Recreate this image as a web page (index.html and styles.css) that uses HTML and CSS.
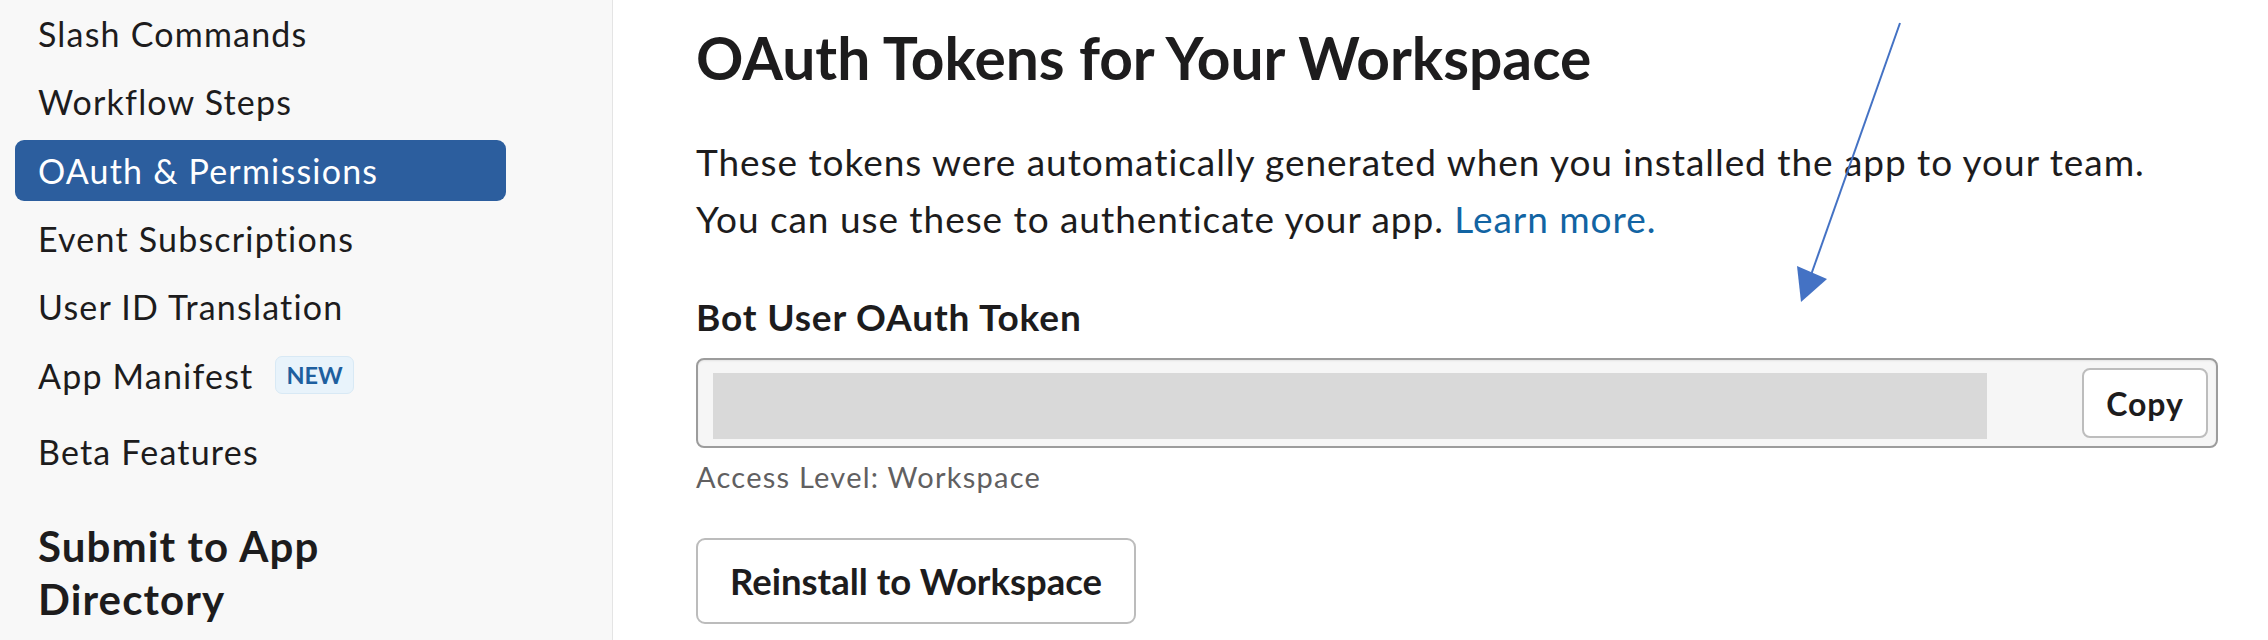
FILE: index.html
```html
<!DOCTYPE html>
<html lang="en">
<head>
<meta charset="utf-8">
<title>OAuth &amp; Permissions</title>
<link rel="stylesheet" href="styles.css">
</head>
<body>
<div class="layout">
  <aside class="sidebar">
    <nav class="nav">
      <a class="nav-item">Slash Commands</a>
      <a class="nav-item">Workflow Steps</a>
      <a class="nav-item active">OAuth &amp; Permissions</a>
      <a class="nav-item">Event Subscriptions</a>
      <a class="nav-item">User ID Translation</a>
      <a class="nav-item nav-item-tall"><span>App Manifest</span><span class="badge">NEW</span></a>
      <a class="nav-item">Beta Features</a>
    </nav>
    <h3 class="sidebar-heading">Submit to App Directory</h3>
  </aside>
  <main class="content">
    <h1 class="page-title">OAuth Tokens for Your Workspace</h1>
    <p class="intro">These tokens were automatically generated when you installed the app to your team.<br>You can use these to authenticate your app. <a class="link">Learn more.</a></p>
    <label class="field-label">Bot User OAuth Token</label>
    <div class="token-field">
      <div class="token-redacted"></div>
      <button class="copy-btn">Copy</button>
    </div>
    <div class="hint">Access Level: Workspace</div>
    <button class="btn">Reinstall to Workspace</button>
  </main>
</div>
<svg class="annotation" width="2268" height="640" viewBox="0 0 2268 640" aria-hidden="true">
  <line x1="1900" y1="23" x2="1811" y2="275" stroke="#4472c4" stroke-width="2"/>
  <polygon points="1801,302 1797,266 1827,279" fill="#4472c4"/>
</svg>
</body>
</html>
```
FILE: styles.css
```css
* { box-sizing: border-box; margin: 0; padding: 0; }

body {
  font-family: Lato, "Noto Sans", sans-serif;
  color: #1d1c1d;
  background: #ffffff;
  overflow: hidden;
  position: relative;
}

.layout {
  display: flex;
  height: 640px;
}

.sidebar {
  width: 613px;
  flex: none;
  background: #f8f8f8;
  border-right: 1px solid #e4e4e4;
  padding: 3px 0 0 15px;
}

.nav {
  display: flex;
  flex-direction: column;
  gap: 7.33px;
  width: 491px;
}

.nav-item {
  display: flex;
  align-items: center;
  height: 61px;
  padding-left: 23px;
  border-radius: 9px;
  font-size: 34px;
  letter-spacing: 1.2px;
  color: #1d1c1d;
  text-decoration: none;
  white-space: nowrap;
}

.nav-item.active {
  background: #2c5e9e;
  color: #ffffff;
}

.nav-item-tall {
  margin-bottom: 8px;
}

.badge {
  margin-left: 22px;
  height: 38px;
  padding: 0 10px;
  display: inline-flex;
  align-items: center;
  border-radius: 7px;
  background: #e8f3fb;
  border: 1px solid #d8e9f5;
  color: #1e5f9f;
  font-size: 23.5px;
  font-weight: 700;
  letter-spacing: 0;
}

.sidebar-heading {
  margin-top: 38.25px;
  padding-left: 23px;
  max-width: 460px;
  font-size: 42px;
  font-weight: 700;
  letter-spacing: 1.1px;
  line-height: 53px;
  color: #1d1c1d;
}

.content {
  flex: 1;
  padding: 22.3px 50px 0 83px;
}

.page-title {
  font-size: 58.7px;
  font-weight: 700;
  line-height: 72px;
}

.intro {
  margin-top: 38.7px;
  font-size: 37px;
  letter-spacing: 0.95px;
  line-height: 57.3px;
  white-space: nowrap;
}

.link {
  color: #1264a3;
  text-decoration: none;
}

.field-label {
  display: block;
  margin-top: 47.8px;
  font-size: 37px;
  font-weight: 700;
  letter-spacing: 0.85px;
  line-height: 44px;
}

.token-field {
  margin-top: 18.9px;
  height: 90px;
  display: flex;
  align-items: center;
  padding: 0 8px 0 15px;
  border: 2px solid #9c9c9c;
  border-radius: 8px;
  background: #f6f6f6;
  box-shadow: inset 0 1px 2px rgba(0, 0, 0, 0.08);
}

.token-redacted {
  align-self: flex-start;
  margin-top: 13px;
  width: 1274px;
  height: 66px;
  background: #d9d9d9;
}

.copy-btn {
  margin-left: auto;
  width: 126px;
  height: 70px;
  border: 2px solid #bdbdbd;
  border-radius: 8px;
  background: #ffffff;
  font-family: Lato, "Noto Sans", sans-serif;
  font-size: 32px;
  font-weight: 700;
  letter-spacing: 0.9px;
  color: #1d1c1d;
}

.hint {
  margin-top: 10.8px;
  font-size: 29px;
  letter-spacing: 1.25px;
  line-height: 36px;
  color: #616061;
}

.btn {
  display: block;
  margin-top: 43.2px;
  width: 440px;
  height: 86px;
  border: 2px solid #bcbcbc;
  border-radius: 9px;
  background: #ffffff;
  font-family: Lato, "Noto Sans", sans-serif;
  font-size: 36.5px;
  font-weight: 700;
  letter-spacing: 0;
  color: #1d1c1d;
}

.annotation {
  position: absolute;
  left: 0;
  top: 0;
  pointer-events: none;
}
```
